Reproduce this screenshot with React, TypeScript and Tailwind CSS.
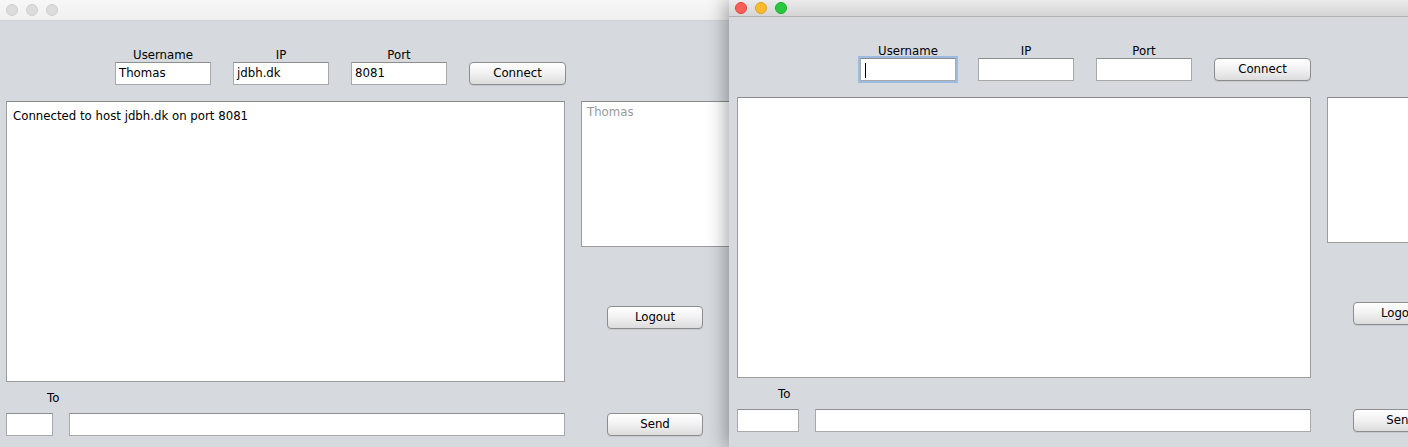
import React from 'react';

interface WindowLayout {
  active: boolean;
  titleH: string;
  userMl: string;
  inputW: string;
  padL: string;
  textW: string;
  toW: string;
  username: string;
  ip: string;
  port: string;
  log: string;
  users: string[];
  focusUser: boolean;
}

const font = { fontFamily: '"DejaVu Sans", "Liberation Sans", sans-serif' };

const TextField = ({ value, width, focused }: { value: string; width: string; focused?: boolean }) => (
  <div
    className={`${width} h-[23px] bg-white flex items-center pl-[3px] pt-[1px] text-[11.75px] text-black border border-[#a9a9a9] border-t-[#8e8e8e] ${
      focused ? 'outline outline-[2px] outline-[#9cbbe2]' : ''
    }`}
  >
    {value}
    {focused && <span className="w-px h-[15px] bg-black ml-[1px]" />}
  </div>
);

const Button = ({ label, width }: { label: string; width: string }) => (
  <div
    className={`${width} h-[23px] pt-[1px] rounded-[4px] border border-[#8d8d8d] bg-gradient-to-b from-[#ffffff] via-[#f1f1f1] to-[#dcdcdc] flex items-center justify-center text-[11.75px] text-black shadow-[0_1px_0_rgba(0,0,0,0.08)]`}
  >
    {label}
  </div>
);

const TrafficLights = ({ active }: { active: boolean }) => (
  <div className="flex gap-[8px] pl-[6px]">
    {active ? (
      <>
        <span className="w-[12px] h-[12px] rounded-full bg-[#fc5f57] border border-[#e0443e]" />
        <span className="w-[12px] h-[12px] rounded-full bg-[#fdbb2e] border border-[#dea123]" />
        <span className="w-[12px] h-[12px] rounded-full bg-[#2ac840] border border-[#1aab29]" />
      </>
    ) : (
      <>
        <span className="w-[12px] h-[12px] rounded-full bg-[#dcdcdc] border border-[#cfcfcf]" />
        <span className="w-[12px] h-[12px] rounded-full bg-[#dcdcdc] border border-[#cfcfcf]" />
        <span className="w-[12px] h-[12px] rounded-full bg-[#dcdcdc] border border-[#cfcfcf]" />
      </>
    )}
  </div>
);

const ChatWindow = ({ l, className }: { l: WindowLayout; className: string }) => (
  <div className={`${className} h-[447px] bg-[#d6d9de] flex flex-col`} style={font}>
    {/* title bar */}
    <div
      className={`${l.titleH} shrink-0 flex items-center border-b ${
        l.active
          ? 'bg-gradient-to-b from-[#ebebeb] to-[#d5d5d5] border-[#b1b1b1]'
          : 'bg-gradient-to-b from-[#f7f7f7] to-[#f0f0f0] border-[#d3d3d3]'
      }`}
    >
      <TrafficLights active={l.active} />
    </div>

    {/* connection row */}
    <div className={`flex items-end gap-[22px] pt-[25px] ${l.userMl}`}>
      {[
        { label: 'Username', value: l.username, focused: l.focusUser },
        { label: 'IP', value: l.ip },
        { label: 'Port', value: l.port },
      ].map((f) => (
        <div key={f.label} className="flex flex-col">
          <div className="h-[16px] pt-[2px] leading-[14px] text-center text-[11.75px] text-black">{f.label}</div>
          <TextField value={f.value} width={l.inputW} focused={f.focused} />
        </div>
      ))}
      <Button label="Connect" width="w-[97px]" />
    </div>

    {/* main area */}
    <div className={`flex gap-[16px] mt-[16px] ${l.padL}`}>
      <div className={`${l.textW} flex flex-col shrink-0`}>
        <div className="h-[281px] bg-white border border-[#9c9c9c] border-t-[#8a8a8a] px-[6px] pt-[6px] text-[11.75px] text-black">
          {l.log}
        </div>
        <div className="h-[16px] leading-[16px] mt-[8px] ml-[41px] text-[11.75px] text-black">To</div>
        <div className="flex gap-[16px] mt-[7px]">
          <TextField value="" width={l.toW} />
          <div className="flex-1">
            <TextField value="" width="w-full" />
          </div>
        </div>
      </div>
      <div className="flex flex-col shrink-0">
        <div className="w-[150px] h-[146px] bg-white border border-[#9c9c9c] border-t-[#8a8a8a] px-[5px] pt-[2px] text-[11.75px] text-[#9a9a9a]">
          {l.users.map((u) => (
            <div key={u}>{u}</div>
          ))}
        </div>
        <div className="ml-[26px] mt-[59px]">
          <Button label="Logout" width="w-[96px]" />
        </div>
        <div className="ml-[26px] mt-[84px]">
          <Button label="Send" width="w-[96px]" />
        </div>
      </div>
    </div>
  </div>
);

const leftWindow: WindowLayout = {
  active: false,
  titleH: 'h-[21px]',
  userMl: 'ml-[115px]',
  inputW: 'w-[96px]',
  padL: 'pl-[6px]',
  textW: 'w-[559px]',
  toW: 'w-[47px]',
  username: 'Thomas',
  ip: 'jdbh.dk',
  port: '8081',
  log: 'Connected to host jdbh.dk on port 8081',
  users: ['Thomas'],
  focusUser: false,
};

const rightWindow: WindowLayout = {
  active: true,
  titleH: 'h-[17px]',
  userMl: 'ml-[131px]',
  inputW: 'w-[96px]',
  padL: 'pl-[8px]',
  textW: 'w-[574px]',
  toW: 'w-[62px]',
  username: '',
  ip: '',
  port: '',
  log: '',
  users: [],
  focusUser: true,
};

export default function App() {
  return (
    <div className="w-[1408px] h-[447px] overflow-hidden flex bg-[#d6d9de]">
      <ChatWindow l={leftWindow} className="w-[729px] shrink-0 overflow-hidden" />
      <ChatWindow
        l={rightWindow}
        className="w-[679px] shrink-0 relative shadow-[-3px_0_18px_rgba(0,0,0,0.35)]"
      />
    </div>
  );
}
